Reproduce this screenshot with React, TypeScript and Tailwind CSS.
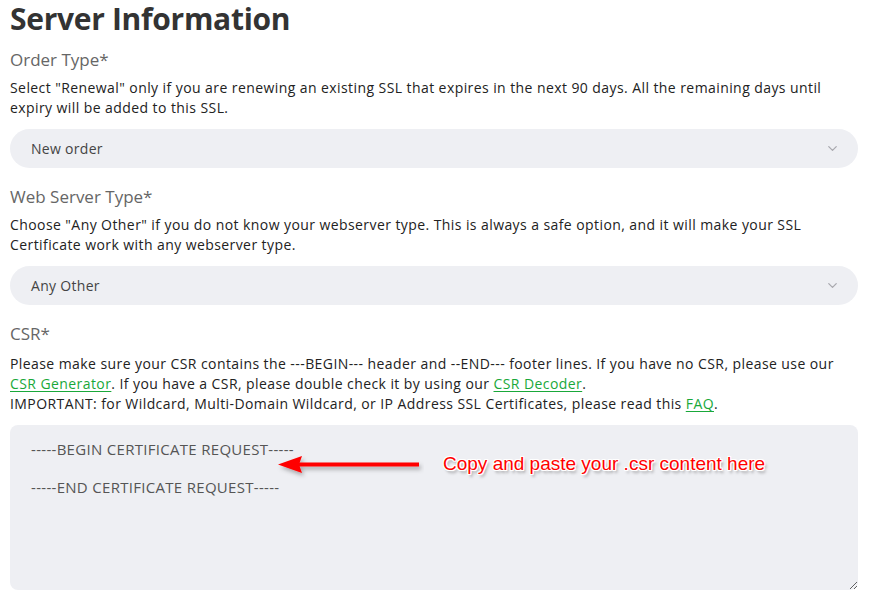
import { ChevronDown } from "lucide-react";

function Select({ value }: { value: string }) {
  return (
    <div className="flex h-[39px] items-center justify-between rounded-full bg-[#eeeff3] pl-[21px] pr-[18px] text-[14px] tracking-[0.3px] text-[#444]">
      <span>{value}</span>
      <ChevronDown size={15} strokeWidth={2} className="text-[#a8a8ae]" />
    </div>
  );
}

function Link({ children }: { children: string }) {
  return <a className="text-[#19a83a] underline underline-offset-2">{children}</a>;
}

function Label({ children }: { children: string }) {
  return <div className="text-[17px] leading-[22px] text-[#666]">{children}</div>;
}

export default function App() {
  return (
    <div className="w-[891px] bg-white px-[10px] pr-[33px] font-['Open_Sans',sans-serif] text-[#222]">
      <h1 className="text-[30px] font-bold leading-[38px] tracking-[-0.3px] text-[#333]">Server Information</h1>

      <div className="mt-[11px]">
        <Label>Order Type*</Label>
        <p className="mt-[7px] text-[14px] font-medium leading-[20px] tracking-[0.42px]">
          Select "Renewal" only if you are renewing an existing SSL that expires in the next 90 days. All the remaining days until expiry will be added to this SSL.
        </p>
        <div className="mt-[11px]">
          <Select value="New order" />
        </div>
      </div>

      <div className="mt-[18px]">
        <Label>Web Server Type*</Label>
        <p className="mt-[7px] text-[14px] font-medium leading-[20px] tracking-[0.42px]">
          Choose "Any Other" if you do not know your webserver type. This is always a safe option, and it will make your SSL Certificate work with any webserver type.
        </p>
        <div className="mt-[11px]">
          <Select value="Any Other" />
        </div>
      </div>

      <div className="mt-[18px]">
        <Label>CSR*</Label>
        <p className="mt-[9px] text-[14px] font-medium leading-[20px] tracking-[0.42px]">
          Please make sure your CSR contains the ---BEGIN--- header and --END--- footer lines. If you have no CSR, please use our{" "}
          <Link>CSR Generator</Link>. If you have a CSR, please double check it by using our <Link>CSR Decoder</Link>.
          <br />
          IMPORTANT: for Wildcard, Multi-Domain Wildcard, or IP Address SSL Certificates, please read this <Link>FAQ</Link>.
        </p>
        <div className="relative mt-[11px]">
          <textarea
            readOnly
            className="block h-[165px] w-full rounded-[8px] bg-[#eeeff3] px-[21px] pt-[15px] text-[15px] leading-[19px] tracking-[0.3px] text-[#555] outline-none"
            defaultValue={"-----BEGIN CERTIFICATE REQUEST-----\n\n-----END CERTIFICATE REQUEST-----"}
          />
          <svg className="absolute left-[264px] top-[29px]" width="150" height="26" viewBox="0 0 150 26">
            <defs>
              <filter id="sh" x="-10%" y="-50%" width="130%" height="220%">
                <feDropShadow dx="2" dy="3" stdDeviation="2" floodColor="#000" floodOpacity="0.3" />
              </filter>
            </defs>
            <g filter="url(#sh)">
              <rect x="24" y="8.5" width="121" height="4" fill="#f00" />
              <polygon points="4,10.5 28,2 25,10.5 28,19" fill="#f00" />
            </g>
          </svg>
          <div
            className="absolute left-[433px] top-[27px] font-['Liberation_Sans',Arial,sans-serif] text-[19px] leading-[24px] text-[#f00]"
            style={{
              textShadow:
                "1px 0 0 #fff, -1px 0 0 #fff, 0 1px 0 #fff, 0 -1px 0 #fff, 1px 1px 0 #fff, -1px -1px 0 #fff, 1px -1px 0 #fff, -1px 1px 0 #fff, 2px 3px 3px rgba(0,0,0,0.35)",
            }}
          >
            Copy and paste your .csr content here
          </div>
        </div>
      </div>
    </div>
  );
}
